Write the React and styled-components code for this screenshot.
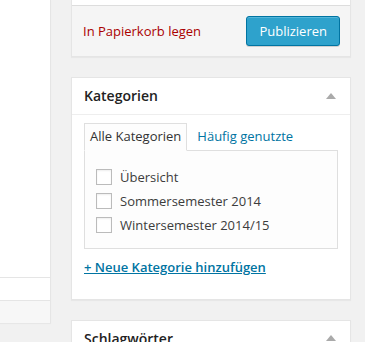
import React from "react";
import styled, { createGlobalStyle } from "styled-components";

const GlobalStyle = createGlobalStyle`
  html, body {
    margin: 0;
    padding: 0;
    background: #f1f1f1;
  }
  body {
    font-family: "Open Sans", "Noto Sans", sans-serif;
    font-size: 13px;
    color: #444;
  }
  * { box-sizing: border-box; }
`;

const Page = styled.div`
  display: flex;
  align-items: flex-start;
  height: 342px;
  overflow: hidden;
`;

const EditorColumn = styled.div`
  width: 51px;
  flex: none;
  display: flex;
  flex-direction: column;
  border-right: 1px solid #e5e5e5;
  box-shadow: 0 1px 1px rgba(0, 0, 0, 0.04);
`;

const EditorArea = styled.div`
  height: 277px;
  background: #fff;
`;

const EditorRow = styled.div`
  height: 23px;
  border-top: 1px solid #e5e5e5;
  background: ${(p) => (p.$muted ? "#f7f7f7" : "#fff")};
`;

const Sidebar = styled.div`
  width: 280px;
  flex: none;
  margin-left: 20px;
`;

const Box = styled.div`
  background: #fff;
  border: 1px solid #e5e5e5;
  border-top: ${(p) => (p.$cut ? "none" : "1px solid #e5e5e5")};
  box-shadow: 0 1px 1px rgba(0, 0, 0, 0.04);
  margin-bottom: 20px;
`;

const BoxTail = styled.div`
  height: 5px;
  background: #fff;
`;

const PublishActions = styled.div`
  display: flex;
  align-items: center;
  justify-content: space-between;
  padding: 10px;
  background: #f5f5f5;
  border-top: 1px solid #ddd;
`;

const TrashLink = styled.a`
  color: #a00;
  text-decoration: none;
  font-size: 13px;
  line-height: 28px;
  padding-left: 1px;
`;

const PrimaryButton = styled.button`
  height: 30px;
  padding: 0 12px 2px;
  font-family: "Open Sans", "Noto Sans", sans-serif;
  font-size: 13px;
  line-height: 28px;
  color: #fff;
  background: #2ea2cc;
  border: 1px solid #0074a2;
  border-radius: 3px;
  box-shadow: inset 0 1px 0 rgba(120, 200, 230, 0.5), 0 1px 0 rgba(0, 0, 0, 0.15);
  cursor: pointer;
`;

const BoxHeader = styled.div`
  display: flex;
  align-items: center;
  justify-content: space-between;
  padding: 8px 12px;
  border-bottom: 1px solid #eee;
  font-size: 14px;
  line-height: 1.4;
  font-weight: 600;
  color: #222;
`;

const Toggle = styled.svg`
  width: 10px;
  height: 8px;
  margin-right: 2px;
  fill: #aaa;
`;

const Inside = styled.div`
  padding: 8px 12px 12px;
`;

const Tabs = styled.div`
  display: flex;
  gap: 4px;
  margin-bottom: -1px;
  position: relative;
`;

const Tab = styled.div`
  padding: 3px 5px 5px;
  line-height: 18px;
  border: 1px solid;
  border-color: ${(p) =>
    p.$active ? "#dfdfdf #dfdfdf #fdfdfd" : "transparent"};
  background: ${(p) => (p.$active ? "#fdfdfd" : "transparent")};
  color: ${(p) => (p.$active ? "#333" : "#0074a2")};
`;

const Panel = styled.div`
  border: 1px solid #dfdfdf;
  background: #fdfdfd;
  padding: 14px 11px 11px;
`;

const Row = styled.label`
  display: flex;
  align-items: center;
  gap: 8px;
  height: 24px;
  color: #3c3c3c;
`;

const Checkbox = styled.span`
  width: 16px;
  height: 16px;
  flex: none;
  border: 1px solid #bbb;
  background: #fff;
  box-shadow: inset 0 1px 2px rgba(0, 0, 0, 0.07);
`;

const AddLink = styled.a`
  display: block;
  margin: 9px 0 11px;
  line-height: 18px;
  font-weight: 600;
  color: #0074a2;
  text-decoration: underline;
`;

const ArrowUp = () => (
  <Toggle viewBox="0 0 10 8">
    <polygon points="0,7 10,7 5,1" />
  </Toggle>
);

const categories = ["Übersicht", "Sommersemester 2014", "Wintersemester 2014/15"];

export default function App() {
  return (
    <>
      <GlobalStyle />
      <Page>
        <EditorColumn>
          <EditorArea />
          <EditorRow />
          <EditorRow $muted />
        </EditorColumn>
        <Sidebar>
          <Box $cut>
            <BoxTail />
            <PublishActions>
              <TrashLink href="#">In Papierkorb legen</TrashLink>
              <PrimaryButton>Publizieren</PrimaryButton>
            </PublishActions>
          </Box>
          <Box>
            <BoxHeader>
              <span>Kategorien</span>
              <ArrowUp />
            </BoxHeader>
            <Inside>
              <Tabs>
                <Tab $active>Alle Kategorien</Tab>
                <Tab>Häufig genutzte</Tab>
              </Tabs>
              <Panel>
                {categories.map((c) => (
                  <Row key={c}>
                    <Checkbox />
                    <span>{c}</span>
                  </Row>
                ))}
              </Panel>
              <AddLink href="#">+ Neue Kategorie hinzufügen</AddLink>
            </Inside>
          </Box>
          <Box>
            <BoxHeader>
              <span>Schlagwörter</span>
              <ArrowUp />
            </BoxHeader>
          </Box>
        </Sidebar>
      </Page>
    </>
  );
}
